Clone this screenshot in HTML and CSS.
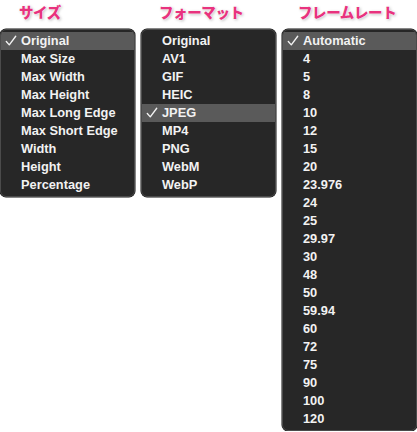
FILE: index.html
```html
<!DOCTYPE html>
<html lang="ja">
<head>
<meta charset="utf-8">
<link rel="stylesheet" href="styles.css">
</head>
<body>
<div class="wrap">
  <section class="col col-size">
    <h2 class="title">サイズ</h2>
    <ul class="menu">
      <li class="item on"><svg class="check" viewBox="0 0 14 14"><path d="M1.5 7.5 L5 11.5 L12.5 1.5"/></svg>Original</li>
      <li class="item">Max Size</li>
      <li class="item">Max Width</li>
      <li class="item">Max Height</li>
      <li class="item">Max Long Edge</li>
      <li class="item">Max Short Edge</li>
      <li class="item">Width</li>
      <li class="item">Height</li>
      <li class="item">Percentage</li>
    </ul>
  </section>
  <section class="col col-format">
    <h2 class="title">フォーマット</h2>
    <ul class="menu">
      <li class="item">Original</li>
      <li class="item">AV1</li>
      <li class="item">GIF</li>
      <li class="item">HEIC</li>
      <li class="item on"><svg class="check" viewBox="0 0 14 14"><path d="M1.5 7.5 L5 11.5 L12.5 1.5"/></svg>JPEG</li>
      <li class="item">MP4</li>
      <li class="item">PNG</li>
      <li class="item">WebM</li>
      <li class="item">WebP</li>
    </ul>
  </section>
  <section class="col col-rate">
    <h2 class="title">フレームレート</h2>
    <ul class="menu">
      <li class="item on"><svg class="check" viewBox="0 0 14 14"><path d="M1.5 7.5 L5 11.5 L12.5 1.5"/></svg>Automatic</li>
      <li class="item">4</li>
      <li class="item">5</li>
      <li class="item">8</li>
      <li class="item">10</li>
      <li class="item">12</li>
      <li class="item">15</li>
      <li class="item">20</li>
      <li class="item">23.976</li>
      <li class="item">24</li>
      <li class="item">25</li>
      <li class="item">29.97</li>
      <li class="item">30</li>
      <li class="item">48</li>
      <li class="item">50</li>
      <li class="item">59.94</li>
      <li class="item">60</li>
      <li class="item">72</li>
      <li class="item">75</li>
      <li class="item">90</li>
      <li class="item">100</li>
      <li class="item">120</li>
    </ul>
  </section>
</div>
</body>
</html>
```
FILE: styles.css
```css
* { box-sizing: border-box; }
html, body {
  margin: 0;
  padding: 0;
  background: #ffffff;
  overflow: hidden;
}
.wrap {
  display: flex;
  align-items: flex-start;
  gap: 6px;
  width: 417px;
}
.col { display: flex; flex-direction: column; }
.col-size { width: 136px; }
.col-format { width: 136px; }
.col-rate { width: 136px; }
.title {
  margin: 0;
  height: 29px;
  padding: 3px 0 0 19px;
  font-family: "Noto Sans CJK JP", sans-serif;
  font-weight: 900;
  font-size: 14.5px;
  line-height: 18px;
  color: #e8337e;
  letter-spacing: -0.4px;
  text-shadow: 0 0 1px #fff, 0 0 2px #fff, 1px 1px 3px rgba(0,0,0,0.3);
}
.col-format .title { padding-left: 18px; }
.col-rate .title { padding-left: 16px; }
.menu {
  list-style: none;
  margin: 0;
  padding: 2px 0 2px;
  background: #272727;
  border: 1px solid #4b4b4b;
  border-radius: 6px;
  box-shadow: 0 0 0 0.5px #111;
  overflow: hidden;
}
.item {
  position: relative;
  height: 18px;
  line-height: 18px;
  padding-left: 20px;
  font-family: "Liberation Sans", Arial, sans-serif;
  font-weight: 700;
  font-size: 12.8px;
  color: #f2f2f2;
  white-space: nowrap;
}
.item.on { background: #5a5a5a; }
.check {
  position: absolute;
  left: 4px;
  top: 3px;
  width: 12px;
  height: 12px;
  fill: none;
  stroke: #f2f2f2;
  stroke-width: 1.6;
  stroke-linecap: round;
  stroke-linejoin: round;
}
```
